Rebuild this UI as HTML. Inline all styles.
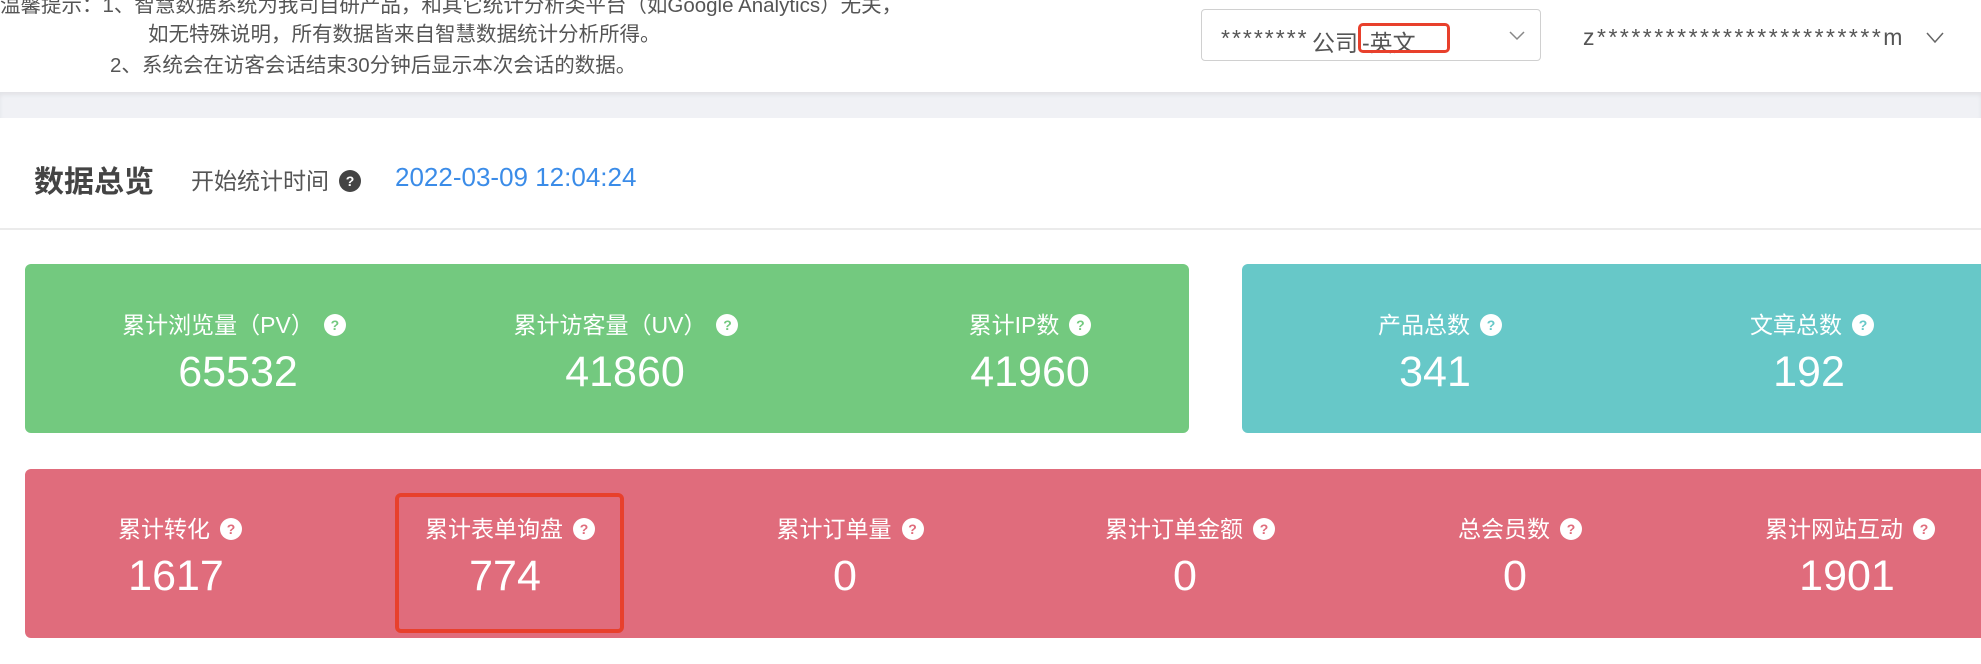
<!DOCTYPE html>
<html><head><meta charset="utf-8"><style>
*{margin:0;padding:0;box-sizing:border-box}
body{width:1981px;height:664px;overflow:hidden;background:#fff;font-family:"Liberation Sans","Noto Sans CJK SC",sans-serif;position:relative;color:#555}
.abs{position:absolute;white-space:nowrap}
.tip{font-size:20.5px;color:#555;line-height:24px}
.band{position:absolute;left:0;top:92px;width:1981px;height:26px;background:#f0f1f5;box-shadow:inset 0 3px 4px rgba(0,0,0,0.06)}
.q{display:inline-block;width:22px;height:22px;border-radius:50%;background:#fff;font-size:14px;font-weight:bold;line-height:22px;text-align:center;vertical-align:middle;margin-left:10px;position:relative;top:-2px}
.card{position:absolute;border-radius:6px}
.col{position:absolute;text-align:center;color:#fff;width:360px}
.lab{font-size:23px;line-height:28px}
.val{font-size:43px;line-height:50px;margin-top:8px}
</style></head><body>
<div class="abs tip" style="left:0;top:-6px">温馨提示：1、智慧数据系统为我司自研产品，和其它统计分析类平台（如Google Analytics）无关，</div>
<div class="abs tip" style="left:148px;top:23px">如无特殊说明，所有数据皆来自智慧数据统计分析所得。</div>
<div class="abs tip" style="left:110px;top:54px">2、系统会在访客会话结束30分钟后显示本次会话的数据。</div>

<div class="abs" style="left:1201px;top:9px;width:340px;height:52px;border:1px solid #d0d0d0;border-radius:4px"></div>
<div class="abs" style="left:1221px;top:25px;font-size:23px;color:#555;letter-spacing:2px">********</div>
<div class="abs" style="left:1312px;top:24px;font-size:23px;color:#555">公司</div>
<div class="abs" style="left:1362px;top:24px;font-size:23px;color:#555">-英文</div>
<div class="abs" style="left:1358px;top:23px;width:92px;height:30px;border:3px solid #e8402c;border-radius:5px"></div>
<svg class="abs" style="left:1508px;top:30px" width="18" height="12"><path d="M2 2 L9 9 L16 2" fill="none" stroke="#888" stroke-width="1.5"/></svg>
<div class="abs" style="left:1583px;top:24px;font-size:23px;color:#555;letter-spacing:2.5px">z*************************m</div>
<svg class="abs" style="left:1925px;top:31px" width="20" height="14"><path d="M2 2 L10 11 L18 2" fill="none" stroke="#666" stroke-width="1.5"/></svg>

<div class="band"></div>

<div class="abs" style="left:34px;top:157px;font-size:30px;font-weight:bold;color:#444">数据总览</div>
<div class="abs" style="left:191px;top:162px;font-size:23px;color:#555">开始统计时间<span class="q" style="background:#444;color:#fff">?</span></div>
<div class="abs" style="left:395px;top:162px;font-size:26px;color:#3b8ce8">2022-03-09 12:04:24</div>
<div class="abs" style="left:0;top:228px;width:1981px;height:2px;background:#ebebeb"></div>

<div class="card" style="left:25px;top:264px;width:1164px;height:169px;background:#73c97f"></div>
<div class="card" style="left:1242px;top:264px;width:800px;height:169px;background:#67c8c8"></div>
<div class="card" style="left:25px;top:469px;width:2000px;height:169px;background:#e06c7c"></div>

<div class="col" style="left:54px;top:311px"><div class="lab">累计浏览量（PV）<span class="q" style="color:#73c97f">?</span></div><div class="val" style="margin-left:8px">65532</div></div>
<div class="col" style="left:446px;top:311px"><div class="lab">累计访客量（UV）<span class="q" style="color:#73c97f">?</span></div><div class="val" style="margin-left:-2px">41860</div></div>
<div class="col" style="left:850px;top:311px"><div class="lab">累计IP数<span class="q" style="color:#73c97f">?</span></div><div class="val" style="margin-left:0px">41960</div></div>
<div class="col" style="left:1260px;top:311px"><div class="lab">产品总数<span class="q" style="color:#67c8c8">?</span></div><div class="val" style="margin-left:-10px">341</div></div>
<div class="col" style="left:1632px;top:311px"><div class="lab">文章总数<span class="q" style="color:#67c8c8">?</span></div><div class="val" style="margin-left:-6px">192</div></div>

<div class="col" style="left:0px;top:515px"><div class="lab">累计转化<span class="q" style="color:#e06c7c">?</span></div><div class="val" style="margin-left:-8px">1617</div></div>
<div class="col" style="left:330px;top:515px"><div class="lab">累计表单询盘<span class="q" style="color:#e06c7c">?</span></div><div class="val" style="margin-left:-10px">774</div></div>
<div class="col" style="left:670px;top:515px"><div class="lab">累计订单量<span class="q" style="color:#e06c7c">?</span></div><div class="val" style="margin-left:-10px">0</div></div>
<div class="col" style="left:1010px;top:515px"><div class="lab">累计订单金额<span class="q" style="color:#e06c7c">?</span></div><div class="val" style="margin-left:-10px">0</div></div>
<div class="col" style="left:1340px;top:515px"><div class="lab">总会员数<span class="q" style="color:#e06c7c">?</span></div><div class="val" style="margin-left:-10px">0</div></div>
<div class="col" style="left:1670px;top:515px"><div class="lab">累计网站互动<span class="q" style="color:#e06c7c">?</span></div><div class="val" style="margin-left:-6px">1901</div></div>

<div class="abs" style="left:395px;top:493px;width:229px;height:140px;border:4px solid #e8402c;border-radius:6px"></div>
</body></html>
